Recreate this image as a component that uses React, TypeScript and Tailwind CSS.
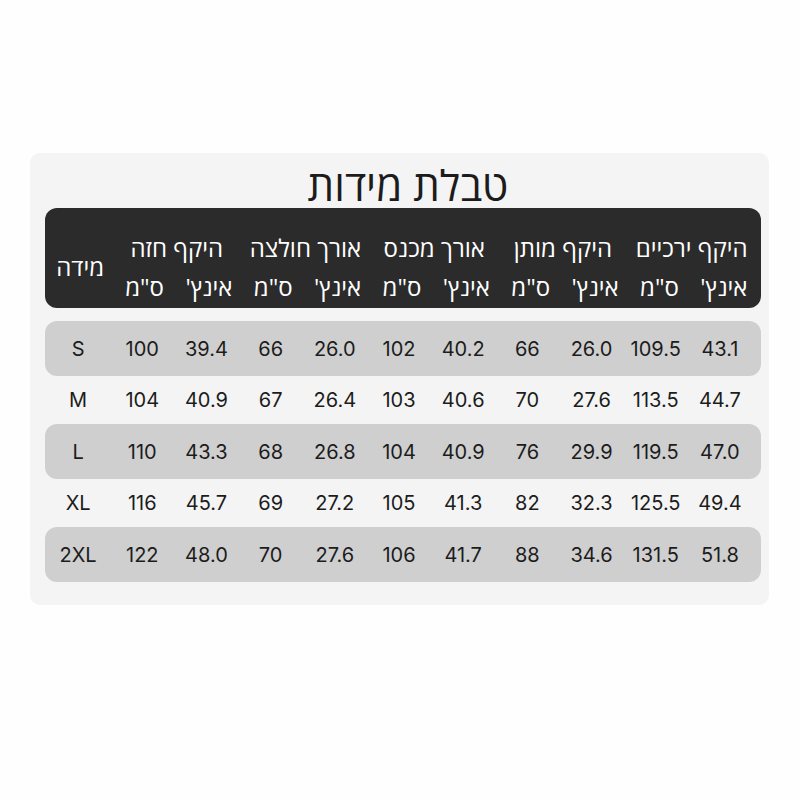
import React from "react";

const rows = [
  { size: "S", v: ["100", "39.4", "66", "26.0", "102", "40.2", "66", "26.0", "109.5", "43.1"], band: true },
  { size: "M", v: ["104", "40.9", "67", "26.4", "103", "40.6", "70", "27.6", "113.5", "44.7"], band: false },
  { size: "L", v: ["110", "43.3", "68", "26.8", "104", "40.9", "76", "29.9", "119.5", "47.0"], band: true },
  { size: "XL", v: ["116", "45.7", "69", "27.2", "105", "41.3", "82", "32.3", "125.5", "49.4"], band: false },
  { size: "2XL", v: ["122", "48.0", "70", "27.6", "106", "41.7", "88", "34.6", "131.5", "51.8"], band: true },
];

const groups = ["היקף ירכיים", "היקף מותן", "אורך מכנס", "אורך חולצה", "היקף חזה"];

export default function App() {
  return (
    <div className="w-[800px] h-[800px] bg-[#fefefe] pt-[153px] pl-[30px]" style={{ fontFamily: "'Open Sans', 'Noto Sans', sans-serif" }}>
      <div className="w-[739px] h-[452px] bg-[#f4f4f4] rounded-[10px] pl-[15px] pr-[8px] pt-[9px]">
        <div dir="rtl" className="text-center text-[42px] leading-[46px] text-[#1c1c1c] h-[46px] pl-[10px]">טבלת מידות</div>
        <div dir="rtl" className="bg-[#2b2b2b] rounded-[12px] h-[100px] pt-[20px] pr-[5px] pl-[3px] grid grid-cols-11 grid-rows-[39px_39px] text-white text-[24px]">
          {groups.map((g, i) => (
            <div key={g} className="col-span-2 flex items-center justify-center whitespace-nowrap leading-none" style={{ gridColumnStart: i * 2 + 1, gridRowStart: 1 }}>
              {g}
            </div>
          ))}
          {groups.map((g, i) => (
            <React.Fragment key={g + "u"}>
              <div className="flex items-center justify-center whitespace-nowrap leading-none" style={{ gridColumnStart: i * 2 + 1, gridRowStart: 2 }}>אינץ'</div>
              <div className="flex items-center justify-center whitespace-nowrap leading-none" style={{ gridColumnStart: i * 2 + 2, gridRowStart: 2 }}>ס"מ</div>
            </React.Fragment>
          ))}
          <div className="row-span-2 flex items-center justify-center leading-none" style={{ gridColumnStart: 11, gridRowStart: 1 }}>מידה</div>
        </div>
        <div className="mt-[13px] flex flex-col">
          {rows.map((r) => (
            <div
              key={r.size}
              dir="rtl"
              className={`grid grid-cols-11 items-center pr-[9px] pl-[1px] text-[20px] text-[#1c1c1c] ${r.band ? "h-[55px] bg-[#cfcfcf] rounded-[12px]" : "h-[48px]"}`}
              style={{ fontFamily: "Inter, 'Open Sans', sans-serif" }}
            >
              {[...r.v].reverse().map((x, i) => (
                <div key={i} className="text-center">{x}</div>
              ))}
              <div className="text-center">{r.size}</div>
            </div>
          ))}
        </div>
      </div>
    </div>
  );
}
